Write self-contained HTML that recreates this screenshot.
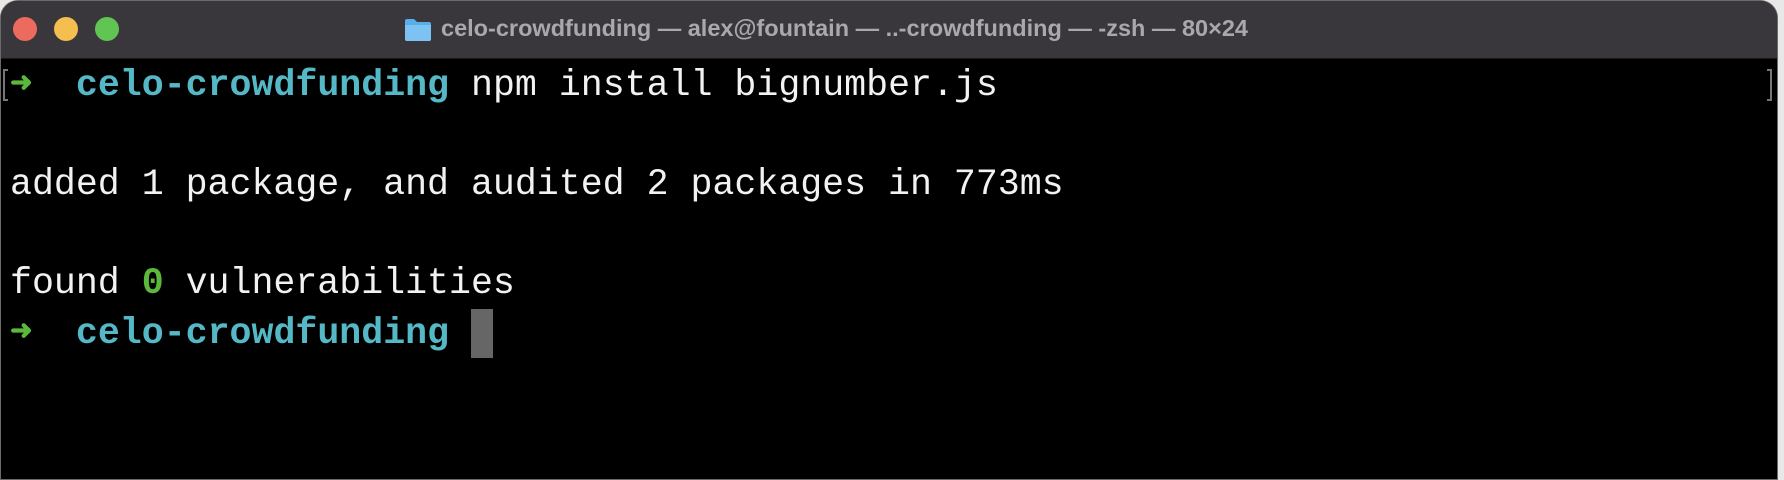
<!DOCTYPE html>
<html><head><meta charset="utf-8"><style>
html,body{margin:0;padding:0;width:1784px;height:476px;overflow:hidden;background:#e8e8e8;}
.win{position:absolute;left:0;top:0;width:1778px;height:480px;background:#000;border-radius:18px 18px 0 0;overflow:hidden;border:1px solid #6a6a6a;box-sizing:border-box;}
.bar{position:absolute;left:0;top:0;right:0;height:57px;background:#39373b;border-bottom:1px solid #1a1a1a;}
.dot{position:absolute;top:16px;width:24px;height:24px;border-radius:50%;}
.title{position:absolute;left:440px;top:14px;font:bold 23.5px "Liberation Sans",sans-serif;color:#a9a8aa;white-space:nowrap;}
.term{position:absolute;left:9px;top:60px;font:36.6px/49.6px "Liberation Mono",monospace;color:#f2f2f2;white-space:pre;}
.c{color:#55b8c6;font-weight:bold}.g{color:#5cb83c;font-weight:bold}
.a{color:#5cb83c;font-weight:bold;display:inline-block;width:22px;font-size:27px;vertical-align:top;line-height:49.6px;}
.cur{position:absolute;left:470px;top:308px;width:22px;height:49px;background:#666;}
</style></head><body>
<div class="win">
<div class="bar">
<div class="dot" style="left:12px;background:#ec6a5e"></div>
<div class="dot" style="left:53px;background:#f4bf4f"></div>
<div class="dot" style="left:94px;background:#61c554"></div>
<svg style="position:absolute;left:403px;top:17px" width="28" height="24" viewBox="0 0 28 24"><path d="M1 3a2 2 0 0 1 2-2h7l3 3h12a2 2 0 0 1 2 2v15a2 2 0 0 1-2 2H3a2 2 0 0 1-2-2z" fill="#5aaee8"/><path d="M1 7h26v14a2 2 0 0 1-2 2H3a2 2 0 0 1-2-2z" fill="#7cc3f3"/></svg>
<div class="title">celo-crowdfunding — alex@fountain — ..-crowdfunding — -zsh — 80×24</div>
</div>
<div style="position:absolute;left:2px;top:68px;width:5px;height:32px;border:2px solid #777;border-right:none;box-sizing:border-box"></div>
<div style="position:absolute;left:1766px;top:68px;width:5px;height:32px;border:2px solid #777;border-left:none;box-sizing:border-box"></div>
<div class="term"><span class="a">➜</span>  <span class="c">celo-crowdfunding</span> npm install bignumber.js

added 1 package, and audited 2 packages in 773ms

found <span class="g">0</span> vulnerabilities
<span class="a">➜</span>  <span class="c">celo-crowdfunding</span> </div>
<div class="cur"></div>
</div>
</body></html>
